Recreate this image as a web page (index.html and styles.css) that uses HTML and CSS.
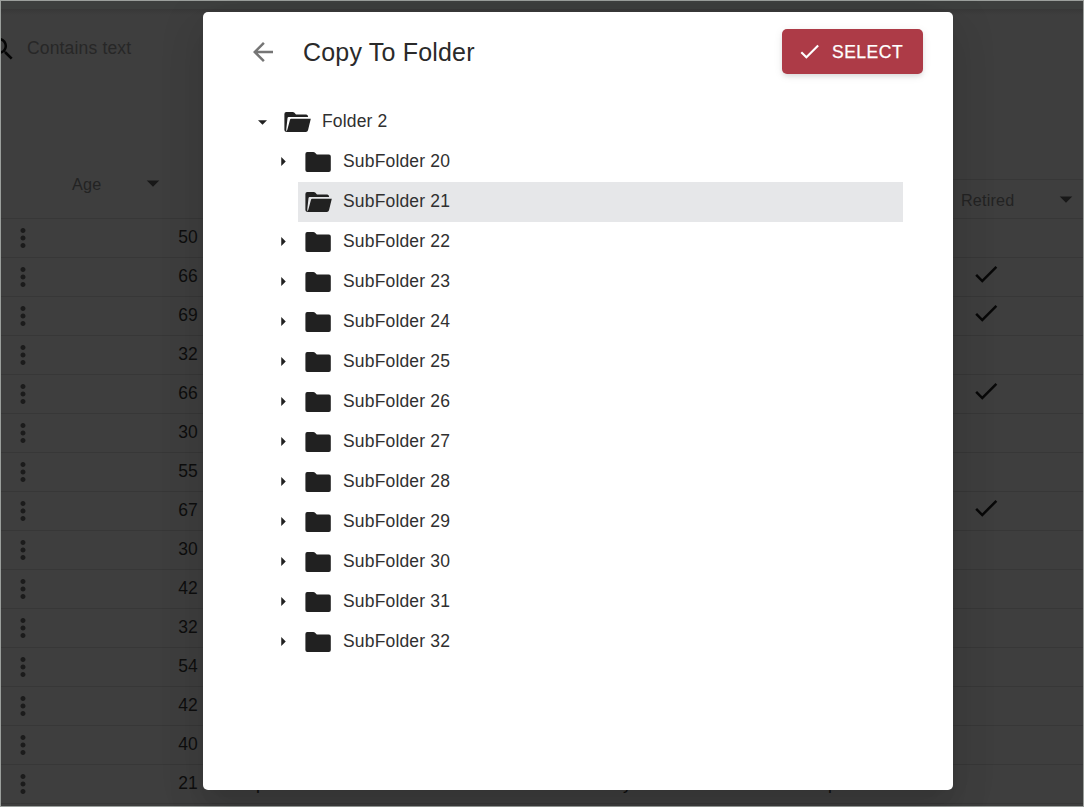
FILE: index.html
```html
<!DOCTYPE html>
<html lang="en">
<head>
<meta charset="utf-8">
<title>Copy To Folder</title>
<link rel="stylesheet" href="styles.css">
</head>
<body>
<svg class="defs" aria-hidden="true">
  <symbol id="dots" viewBox="0 0 24 24"><path d="M12 8c1.100 0 2-.9 2-2s-.9-2-2-2-2 .9-2 2 .9 2 2 2zm0 2c-1.100 0-2 .9-2 2s.9 2 2 2 2-.9 2-2-.9-2-2-2zm0 6c-1.100 0-2 .9-2 2s.9 2 2 2 2-.9 2-2-.9-2-2-2z"/></symbol>
  <symbol id="check" viewBox="0 0 24 24"><path d="M9 16.170 4.830 12l-1.420 1.410L9 19 21 7l-1.410-1.410z"/></symbol>
  <symbol id="drop" viewBox="0 0 24 24"><path d="m7 10 5 5 5-5z"/></symbol>
  <symbol id="down" viewBox="0 0 10 5"><path d="M0 0h10L5 5z"/></symbol>
  <symbol id="right" viewBox="0 0 5 10"><path d="M0 0v10l5-5z"/></symbol>
  <symbol id="folder" viewBox="0 0 27 20"><path d="M2.300 0H8.300Q9.200 0 9.800.6L11.800 2.500H23.900Q25.800 2.500 25.800 4.400V18.100Q25.800 20 23.900 20H2.300Q.4 20 .4 18.100V1.900Q.4 0 2.300 0z"/></symbol>
  <symbol id="open" viewBox="0 0 27 20"><path d="M2.300 0H8.800Q9.600 0 10.200.6L12 2.500H22.300Q24 2.500 24.200 5H4.600Q3.700 5 3.500 6.200L2.300 17V19.900Q.4 19.500 .4 18V2Q.4 0 2.300 0z"/><path d="M7 6.800H26.800L24 18.300Q23.500 20 21.900 20H1.600Q2.800 19.300 3.300 17.700L6 7.700Q6.300 6.800 7 6.800z"/></symbol>
</svg>

<div class="app">
  <div class="topbar"></div>
  <div class="search">
    <svg class="search-icon" viewBox="0 0 24 24"><path d="M15.500 14h-.79l-.28-.27C15.410 12.590 16 11.110 16 9.500 16 5.910 13.090 3 9.500 3S3 5.910 3 9.500 5.910 16 9.500 16c1.610 0 3.090-.59 4.230-1.570l.27.28v.79l5 4.990L20.490 19l-4.990-5zm-6 0C7.010 14 5 11.990 5 9.500S7.010 5 9.500 5 14 7.010 14 9.500 11.990 14 9.500 14z"/></svg>
    <span>Contains text</span>
  </div>
  <div class="head">
    <div class="head-age"><span>Age</span><svg class="icon"><use href="#drop"/></svg></div>
    <div class="head-retired"><span>Retired</span><svg class="icon"><use href="#drop"/></svg></div>
  </div>
  <div class="rows">
    <div class="row"><svg class="icon dots"><use href="#dots"/></svg><span class="age">50</span></div>
    <div class="row"><svg class="icon dots"><use href="#dots"/></svg><span class="age">66</span><svg class="icon retired"><use href="#check"/></svg></div>
    <div class="row"><svg class="icon dots"><use href="#dots"/></svg><span class="age">69</span><svg class="icon retired"><use href="#check"/></svg></div>
    <div class="row"><svg class="icon dots"><use href="#dots"/></svg><span class="age">32</span></div>
    <div class="row"><svg class="icon dots"><use href="#dots"/></svg><span class="age">66</span><svg class="icon retired"><use href="#check"/></svg></div>
    <div class="row"><svg class="icon dots"><use href="#dots"/></svg><span class="age">30</span></div>
    <div class="row"><svg class="icon dots"><use href="#dots"/></svg><span class="age">55</span></div>
    <div class="row"><svg class="icon dots"><use href="#dots"/></svg><span class="age">67</span><svg class="icon retired"><use href="#check"/></svg></div>
    <div class="row"><svg class="icon dots"><use href="#dots"/></svg><span class="age">30</span></div>
    <div class="row"><svg class="icon dots"><use href="#dots"/></svg><span class="age">42</span></div>
    <div class="row"><svg class="icon dots"><use href="#dots"/></svg><span class="age">32</span></div>
    <div class="row"><svg class="icon dots"><use href="#dots"/></svg><span class="age">54</span></div>
    <div class="row"><svg class="icon dots"><use href="#dots"/></svg><span class="age">42</span></div>
    <div class="row"><svg class="icon dots"><use href="#dots"/></svg><span class="age">40</span></div>
    <div class="row"><svg class="icon dots"><use href="#dots"/></svg><span class="age">21</span><span class="cell first">p</span><span class="cell second">y</span><span class="cell">p</span></div>
  </div>
</div>

<div class="dialog">
  <div class="dialog-head">
    <svg class="icon back" viewBox="0 0 24 24"><path d="M20 11H7.830l5.590-5.590L12 4l-8 8 8 8 1.410-1.410L7.830 13H20v-2z"/></svg>
    <div class="title">Copy To Folder</div>
    <div class="select"><svg class="select-icon"><use href="#check"/></svg><span>SELECT</span></div>
  </div>
  <div class="tree">
    <div class="node root"><svg class="down"><use href="#down"/></svg><div class="item"><svg class="folder"><use href="#open"/></svg><span>Folder 2</span></div></div>
    <div class="children">
      <div class="node"><svg class="right"><use href="#right"/></svg><div class="item"><svg class="folder"><use href="#folder"/></svg><span>SubFolder 20</span></div></div>
      <div class="node"><div class="right"></div><div class="item selected"><svg class="folder"><use href="#open"/></svg><span>SubFolder 21</span></div></div>
      <div class="node"><svg class="right"><use href="#right"/></svg><div class="item"><svg class="folder"><use href="#folder"/></svg><span>SubFolder 22</span></div></div>
      <div class="node"><svg class="right"><use href="#right"/></svg><div class="item"><svg class="folder"><use href="#folder"/></svg><span>SubFolder 23</span></div></div>
      <div class="node"><svg class="right"><use href="#right"/></svg><div class="item"><svg class="folder"><use href="#folder"/></svg><span>SubFolder 24</span></div></div>
      <div class="node"><svg class="right"><use href="#right"/></svg><div class="item"><svg class="folder"><use href="#folder"/></svg><span>SubFolder 25</span></div></div>
      <div class="node"><svg class="right"><use href="#right"/></svg><div class="item"><svg class="folder"><use href="#folder"/></svg><span>SubFolder 26</span></div></div>
      <div class="node"><svg class="right"><use href="#right"/></svg><div class="item"><svg class="folder"><use href="#folder"/></svg><span>SubFolder 27</span></div></div>
      <div class="node"><svg class="right"><use href="#right"/></svg><div class="item"><svg class="folder"><use href="#folder"/></svg><span>SubFolder 28</span></div></div>
      <div class="node"><svg class="right"><use href="#right"/></svg><div class="item"><svg class="folder"><use href="#folder"/></svg><span>SubFolder 29</span></div></div>
      <div class="node"><svg class="right"><use href="#right"/></svg><div class="item"><svg class="folder"><use href="#folder"/></svg><span>SubFolder 30</span></div></div>
      <div class="node"><svg class="right"><use href="#right"/></svg><div class="item"><svg class="folder"><use href="#folder"/></svg><span>SubFolder 31</span></div></div>
      <div class="node"><svg class="right"><use href="#right"/></svg><div class="item"><svg class="folder"><use href="#folder"/></svg><span>SubFolder 32</span></div></div>
    </div>
  </div>
</div>
</body>
</html>
```

FILE: styles.css
```css
* { box-sizing: border-box; }
body {
  margin: 0;
  width: 1084px;
  height: 807px;
  position: relative;
  overflow: hidden;
  font-family: "Liberation Sans", Arial, sans-serif;
  font-size: 17.5px;
  letter-spacing: 0.164px;
  line-height: 20px;
}
svg { display: block; flex: none; fill: currentColor; }
.defs { display: none; }
.icon { width: 30px; height: 30px; }

.app {
  height: 807px;
  border: 1px solid #9b9f9c;
  background: #3e3e3e;
  color: #0e0e0e;
  overflow: hidden;
}
.topbar { height: 8px; background: #3d3f3e; }
.search {
  height: 170px;
  padding-top: 25px;
  display: flex;
  align-items: flex-start;
  background: linear-gradient(#383838, #3e3e3e 6px);
  color: #272727;
}
.search-icon { width: 30px; height: 30px; margin-left: -14px; color: #050505; }
.search span { margin: 4px 0 0 10px; }

.head {
  height: 40px;
  display: flex;
  justify-content: space-between;
  border-bottom: 1px solid #373737;
  font-size: 16.2px;
  color: #232323;
}
.head-age { width: 202px; padding-left: 71px; display: flex; align-items: flex-start; }
.head-age span { width: 66px; margin-top: -5px; }
.head-age .icon { margin-top: -11px; color: #181818; }
.head-retired {
  width: 131px;
  padding-left: 9px;
  display: flex;
  border-top: 1px solid #373737;
}
.head-retired span { width: 90px; margin-top: 10px; }
.head-retired .icon { margin-top: 4px; color: #181818; }

.row {
  height: 39px;
  display: flex;
  align-items: center;
  border-bottom: 1px solid #373737;
}
.dots { margin-left: 7px; color: #1b1b1b; }
.age { width: 160px; text-align: right; margin-top: -2px; }
.retired { margin-left: 773px; margin-top: -7px; color: #080808; }
.cell { margin-top: -2px; }
.first { width: 367px; margin-left: 58px; }
.second { width: 205px; }

.dialog {
  position: absolute;
  left: 203px;
  top: 12px;
  width: 750px;
  height: 778px;
  padding: 17px 30px 0 45px;
  border-radius: 5px;
  background: #fff;
  color: #212121;
  box-shadow: 0 11px 15px -7px rgba(0,0,0,.06), 0 24px 38px 3px rgba(0,0,0,.07), 0 9px 46px 8px rgba(0,0,0,.06);
}
.dialog-head { height: 73px; display: flex; align-items: flex-start; }
.back { margin-top: 8px; color: #757575; }
.title {
  flex: 1;
  margin: 8px 0 0 25px;
  font-size: 25px;
  line-height: 30px;
  letter-spacing: 0.188px;
  color: #2a2a2a;
}
.select {
  width: 141px;
  height: 45px;
  padding-left: 15px;
  display: flex;
  align-items: center;
  gap: 10px;
  border-radius: 5px;
  background: #ad3b47;
  color: #fff;
  letter-spacing: 0.5px;
  -webkit-text-stroke: 0.25px #fff;
  box-shadow: 0 3px 5px -1px rgba(0,0,0,.1), 0 2px 10px rgba(0,0,0,.08);
}
.select-icon { width: 25px; height: 25px; }
.tree { padding: 0 20px 0 10px; }
.node { height: 40px; display: flex; align-items: center; }
.down { width: 9px; height: 5px; }
.right { width: 5px; height: 9px; }
.children { padding-left: 23px; }
.item { flex: 1; height: 40px; display: flex; align-items: center; padding-left: 7px; margin-left: 12px; }
.root .item { margin-left: 10px; }
.children svg.right { margin-top: -1px; }
.item span { margin: -2px 0 0 11px; color: #303030; }
.folder { width: 27px; height: 20px; }
.selected { background: #e6e7e9; }
```
